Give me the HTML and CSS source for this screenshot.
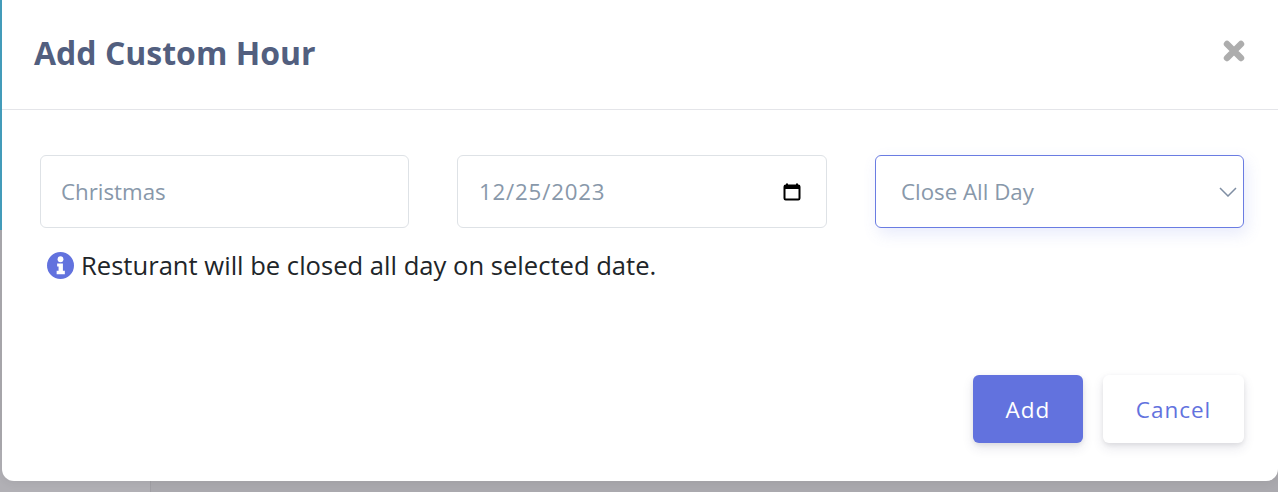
FILE: index.html
```html
<!DOCTYPE html>
<html lang="en">
<head>
    <meta charset="UTF-8">
    <meta name="viewport" content="width=device-width, initial-scale=1.0">
    <title>Add Custom Hour</title>
    <link rel="stylesheet" href="styles.css">
</head>
<body>
    <div class="backdrop">
        <div class="backdrop-accent"></div>
        <div class="backdrop-panel"></div>
    </div>

    <div class="modal">
        <header class="modal-header">
            <h2>Add Custom Hour</h2>
            <button type="button" class="close" aria-label="Close">
                <svg viewBox="0 0 24 24" width="24" height="24">
                    <path d="M5 5 L19 19 M19 5 L5 19" stroke="#adadad" stroke-width="6.4" stroke-linecap="round"/>
                </svg>
            </button>
        </header>

        <div class="modal-body">
            <div class="fields">
                <div class="field">Christmas</div>
                <div class="field field-date">
                    <span class="date-value">12/25/2023</span>
                    <svg viewBox="0 0 20 20" width="20" height="20">
                        <path d="M5 1.5 V4 M15 1.5 V4" stroke="#000" stroke-width="2"/>
                        <rect x="2.5" y="3.5" width="15" height="14" rx="1.2" fill="none" stroke="#000" stroke-width="2"/>
                        <rect x="2.5" y="3.5" width="15" height="3.5" fill="#000"/>
                    </svg>
                </div>
                <div class="field field-select">
                    <span>Close All Day</span>
                    <svg viewBox="0 0 18 10" width="18" height="10">
                        <path d="M1 1 L9 9 L17 1" fill="none" stroke="#7f8ea3" stroke-width="1.5"/>
                    </svg>
                </div>
            </div>
            <p class="note">
                <svg viewBox="0 0 28 28" width="27" height="27">
                    <circle cx="14" cy="14" r="14" fill="#6272de"/>
                    <circle cx="14" cy="7.5" r="3" fill="#fff"/>
                    <path d="M10.5 12 H16.5 V19.5 H18.5 V23 H10 V19.5 H12 V15 H10.5 Z" fill="#fff"/>
                </svg>
                Resturant will be closed all day on selected date.
            </p>
        </div>

        <footer class="modal-footer">
            <button type="button" class="btn btn-primary">Add</button>
            <button type="button" class="btn btn-light">Cancel</button>
        </footer>
    </div>
</body>
</html>
```

FILE: styles.css
```css
* {
    margin: 0;
    padding: 0;
    box-sizing: border-box;
    font-family: 'Open Sans', sans-serif;
}

html, body {
    height: 100%;
    overflow: hidden;
}

body {
    position: relative;
    background: #aaa9ae;
}

/* Page behind the modal */
.backdrop {
    position: absolute;
    inset: 0;
}

.backdrop-accent {
    width: 8px;
    height: 230px;
    background: #459fbe;
}

.backdrop-panel {
    position: absolute;
    left: 0;
    bottom: 0;
    width: 151px;
    height: 42px;
    background: #b1b0b5;
    border-right: 1px solid #a09fa4;
}

/* Modal */
.modal {
    position: absolute;
    top: -12px;
    left: 2px;
    right: 0;
    height: 493px;
    display: flex;
    flex-direction: column;
    background: #fff;
    border-radius: 12px;
    box-shadow: 0 2px 10px rgba(0, 0, 0, 0.06);
}

.modal-header {
    height: 122px;
    padding: 8px 32px 0;
    display: flex;
    justify-content: space-between;
    align-items: center;
    border-bottom: 1px solid #e4e5e9;
}

.modal-header h2 {
    font-size: 32px;
    font-weight: 700;
    color: #525f7f;
}

.close {
    border: none;
    background: none;
    display: flex;
    margin-bottom: 4px;
}

/* Fields */
.modal-body {
    flex: 1;
    padding: 45px 34px 0 38px;
}

.fields {
    display: grid;
    grid-template-columns: 369px 370px 369px;
    justify-content: space-between;
}

.field {
    height: 73px;
    padding: 0 20px;
    display: flex;
    align-items: center;
    justify-content: space-between;
    font-size: 22.3px;
    color: #8898aa;
    background: #fff;
    border: 1px solid #dee2e6;
    border-radius: 6px;
}

.field-date {
    padding: 0 24px 0 21px;
}

.date-value {
    letter-spacing: 0.8px;
}

.field-select {
    padding: 0 6px 0 25px;
    border-color: #6a7ce2;
    box-shadow: 3px 6px 16px rgba(94, 114, 228, 0.14);
}

.note {
    margin: 20px 0 0 7px;
    display: flex;
    align-items: center;
    gap: 7px;
    font-size: 25.6px;
    color: #212529;
}

/* Footer buttons */
.modal-footer {
    padding: 0 34px 38px;
    display: flex;
    justify-content: flex-end;
    gap: 20px;
}

.btn {
    height: 68px;
    border: none;
    border-radius: 6px;
    font-size: 22.5px;
    font-weight: 500;
    letter-spacing: 1px;
    box-shadow: 0 5px 12px rgba(50, 50, 93, 0.11), 0 2px 5px rgba(0, 0, 0, 0.08);
}

.btn-primary {
    width: 110px;
    background: #6272de;
    color: #fff;
}

.btn-light {
    width: 141px;
    background: #fff;
    color: #6272de;
}
```
